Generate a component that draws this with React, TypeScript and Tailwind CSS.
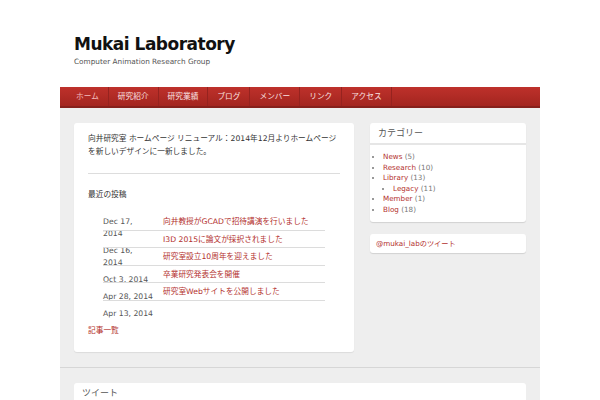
const font = { fontFamily: '"DejaVu Sans", "Noto Sans CJK JP", sans-serif' };

const navItems = ['ホーム', '研究紹介', '研究業績', 'ブログ', 'メンバー', 'リンク', 'アクセス'];

const posts = [
  { date: 'Dec 17, 2014', title: '向井教授がGCADで招待講演を行いました' },
  { date: 'Dec 16, 2014', title: 'I3D 2015に論文が採択されました' },
  { date: 'Oct 3, 2014', title: '研究室設立10周年を迎えました' },
  { date: 'Apr 28, 2014', title: '卒業研究発表会を開催' },
  { date: 'Apr 13, 2014', title: '研究室Webサイトを公開しました' },
];

const categories = [
  { name: 'News', count: 5 },
  { name: 'Research', count: 10 },
  { name: 'Library', count: 13, children: [{ name: 'Legacy', count: 11 }] },
  { name: 'Member', count: 1 },
  { name: 'Blog', count: 18 },
];

export default function App() {
  return (
    <div className="min-h-[400px] bg-white" style={font}>
      <div className="mx-auto w-[480px]">
        {/* Header */}
        <div className="px-[14px] pt-[34px]">
          <h1 className="text-[17px] font-bold leading-[20px] tracking-[-0.5px] text-[#111]">
            Mukai Laboratory
          </h1>
          <p className="mt-[3px] text-[7.3px] leading-[10px] text-[#555]">
            Computer Animation Research Group
          </p>
        </div>

        {/* Nav */}
        <nav className="mt-[20px] flex h-[21px] border-b-2 border-[#86201b] bg-gradient-to-b from-[#be312b] to-[#a3251f] pl-[7px]">
          {navItems.map((item, i) => (
            <a
              key={item}
              className={`flex items-center border-r border-[#96231f] px-[9px] text-[7.7px] ${
                i === 0 ? 'text-[#f4bcbc]' : 'text-[#fbe4e4]'
              }`}
            >
              {item}
            </a>
          ))}
        </nav>

        {/* Content */}
        <div className="bg-[#eeeeee]">
          <div className="flex gap-[16px] px-[14px] pt-[15px] pb-[15px]">
            {/* Main */}
            <div className="w-[280px] rounded-[3px] bg-white px-[14px] pt-[10px] pb-[14.5px] text-[7.7px] text-[#333] shadow-[0_1px_1px_rgba(0,0,0,0.08)]">
              <p className="leading-[12.5px]">
                向井研究室 ホームページ リニューアル：2014年12月よりホームページを新しいデザインに一新しました。
              </p>
              <hr className="mt-[15px] border-t border-[#dddddd]" />
              <h2 className="mt-[15px] leading-[12.5px]">最近の投稿</h2>

              <div className="mx-[15px] mt-[11.5px] grid">
                <div className="col-start-1 row-start-1 flex flex-col pt-[3px]">
                  {posts.map((p) => (
                    <span key={p.date} className="mb-[5px] w-[51px] leading-[12px] text-[#555]">
                      {p.date}
                    </span>
                  ))}
                </div>
                <ul className="col-start-1 row-start-1 self-start">
                  {posts.map((p) => (
                    <li
                      key={p.title}
                      className="border-b border-[#dcdcdc] pt-[3px] pb-[1.5px] pl-[60px] leading-[12px]"
                    >
                      <a className="text-[#b3302d]">{p.title}</a>
                    </li>
                  ))}
                </ul>
              </div>

              <a className="block leading-[12.5px] text-[#b3302d]">記事一覧</a>
            </div>

            {/* Sidebar */}
            <div className="flex w-[156px] flex-col gap-[12px] self-start">
              <div className="rounded-[3px] bg-white pb-[6.5px] shadow-[0_1px_1px_rgba(0,0,0,0.12)]">
                <h3 className="border-b-2 border-[#e6e6e6] px-[8px] text-[9px] leading-[20px] text-[#555]">
                  カテゴリー
                </h3>
                <ul className="list-disc pt-[7px] pl-[13px] text-[7.2px] leading-[10.5px] marker:text-[#777]">
                  {categories.map((c) => (
                    <li key={c.name}>
                      <a className="text-[#b3302d]">{c.name}</a>
                      <span className="text-[#777]"> ({c.count})</span>
                      {c.children && (
                        <ul className="list-disc pl-[10px]">
                          {c.children.map((ch) => (
                            <li key={ch.name}>
                              <a className="text-[#b3302d]">{ch.name}</a>
                              <span className="text-[#777]"> ({ch.count})</span>
                            </li>
                          ))}
                        </ul>
                      )}
                    </li>
                  ))}
                </ul>
              </div>

              <div className="rounded-[3px] bg-white px-[6px] text-[7.2px] leading-[19px] shadow-[0_1px_1px_rgba(0,0,0,0.12)]">
                <a className="text-[#b3302d]">@mukai_labのツイート</a>
              </div>
            </div>
          </div>

          {/* Lower area */}
          <div className="border-t border-[#d6d6d6] px-[14px] pt-[15px] pb-[20px]">
            <div className="h-[80px] rounded-[3px] bg-white">
              <h3 className="px-[8px] text-[9px] leading-[20px] text-[#555]">ツイート</h3>
            </div>
          </div>
        </div>
      </div>
    </div>
  );
}
